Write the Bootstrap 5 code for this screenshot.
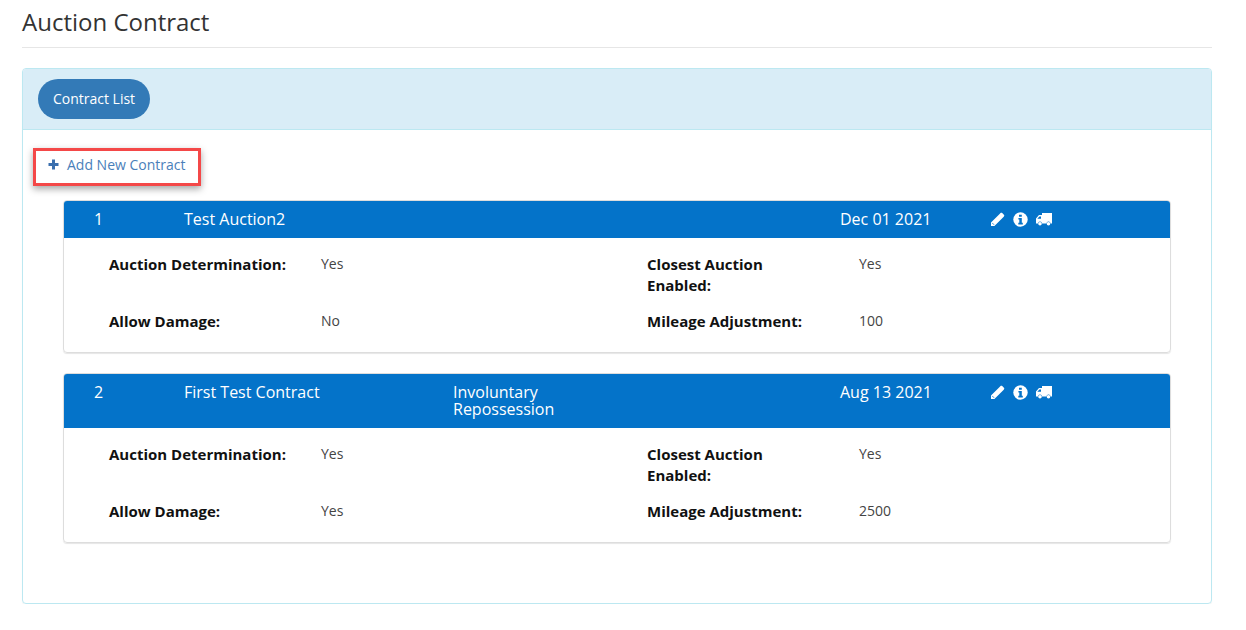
<!DOCTYPE html>
<html lang="en"><head><meta charset="utf-8"><title>Auction Contract</title>
<link href="https://cdn.jsdelivr.net/npm/bootstrap@5.3.0/dist/css/bootstrap.min.css" rel="stylesheet">
<style>
body{font-family:"Open Sans","Liberation Sans",sans-serif;font-size:14px;color:#333;background:#fff;overflow:hidden}
.page-wrap{padding:0 34px 0 22px}
.page-title{font-size:24px;font-weight:400;line-height:32px;margin:6px 0 0;padding-bottom:9px;border-bottom:1px solid #e6e6e6;color:#333}
.outer-panel{margin-top:20px;height:536px;border:1px solid #bce8f1;border-radius:4px;box-shadow:0 1px 1px rgba(0,0,0,.05)}
.outer-head{height:61px;background:#d9edf7;border-bottom:1px solid #bce8f1;padding:10px 15px;border-radius:3px 3px 0 0}
.pill-btn{display:inline-block;width:112px;height:40px;line-height:37px;padding:0 0 2px;text-align:center;background:#337ab7;color:#fff;border:0;border-radius:20px;font-size:14px;font-weight:500}
.add-link{display:flex;align-items:center;width:168px;height:38px;margin:18px 0 0 10px;padding:0 0 6px 12px;border:3px solid #f44848;box-shadow:0 3px 7px rgba(0,0,0,.35);color:#4a80ba;text-decoration:none;font-size:14px;gap:8px}
.contract{margin:14px 40px 20px 40px;border:1px solid #ddd;border-radius:4px;box-shadow:0 1px 1px rgba(0,0,0,.1);overflow:hidden}
.contract-head{display:flex;align-items:flex-start;background:#0473c9;color:#fff;font-size:16px;line-height:17px;padding:10px 0 10px 30px}
.col-no{width:90px}.col-name{width:269px}.col-type{width:387px}.col-date{width:150px}
.col-type span{display:block;width:125px}
.col-icons{display:flex;align-items:center;gap:8px;height:17px}
.contract-body{display:grid;grid-template-columns:212px 326px 212px 1fr;padding:16px 45px 0}
.contract-body>div{line-height:21px;min-height:57px}
.contract-body>.last{min-height:41px}
.lbl{font-weight:700;font-size:15px;color:#111}
.lbl.wrap-lbl{padding-right:40px}
.contract-body>.val{line-height:19px;color:#444}
</style></head>
<body>
<div class="page-wrap">
<h1 class="page-title">Auction Contract</h1>
<div class="outer-panel">
 <div class="outer-head"><button type="button" class="btn pill-btn">Contract List</button></div>
 <a href="#" class="add-link"><svg width="11" height="11" viewBox="0 0 11 11"><path d="M4 0.5h3V4h3.5v3H7v3.5H4V7H.5V4H4z" fill="#3b6fae"/></svg><span>Add New Contract</span></a>

 <div class="contract">
  <div class="contract-head">
   <div class="col-no">1</div><div class="col-name">Test Auction2</div><div class="col-type"></div><div class="col-date">Dec 01 2021</div>
   <div class="col-icons">
    <svg width="15" height="15" viewBox="0 0 15 15"><path d="M1 10.6 9.600 2l3.400 3.400L4.400 14H1zM10.500 1.100c.5-.5 1.200-.5 1.700 0l1.700 1.700c.5.5.5 1.200 0 1.700l-.9.9-3.400-3.400z" fill="#fff"/><path d="M2.200 10.900l1.900 1.900" stroke="#0473c9" stroke-width=".8"/></svg>
    <svg width="15" height="15" viewBox="0 0 15 15"><circle cx="7.500" cy="7.500" r="7.200" fill="#fff"/><path d="M6 2.700h2.800v2.100H6zM5.400 6h3.400v4.800h1v1.600H5.300v-1.600h1V7.600H5.400z" fill="#0473c9"/></svg>
    <svg width="16" height="13" viewBox="0 0 16 13"><path d="M6 0h10v10.500h-1.500a2 2 0 0 0-4 0h-4.500a2 2 0 0 0-4 0H0V5.500L3 2h3z" fill="#fff"/><circle cx="4" cy="10.700" r="1.800" fill="#fff"/><circle cx="12.500" cy="10.700" r="1.800" fill="#fff"/><path d="M1.300 5.800 3.400 3.500H5v2.300z" fill="#0473c9"/></svg>
   </div>
  </div>
  <div class="contract-body">
   <div class="lbl">Auction Determination:</div><div class="val">Yes</div><div class="lbl wrap-lbl">Closest Auction Enabled:</div><div class="val">Yes</div>
   <div class="lbl last">Allow Damage:</div><div class="val last">No</div><div class="lbl last">Mileage Adjustment:</div><div class="val last">100</div>
  </div>
 </div>

 <div class="contract">
  <div class="contract-head">
   <div class="col-no">2</div><div class="col-name">First Test Contract</div><div class="col-type"><span>Involuntary Repossession</span></div><div class="col-date">Aug 13 2021</div>
   <div class="col-icons">
    <svg width="15" height="15" viewBox="0 0 15 15"><path d="M1 10.6 9.600 2l3.400 3.400L4.400 14H1zM10.500 1.100c.5-.5 1.200-.5 1.700 0l1.700 1.700c.5.5.5 1.200 0 1.700l-.9.9-3.400-3.400z" fill="#fff"/><path d="M2.200 10.900l1.900 1.900" stroke="#0473c9" stroke-width=".8"/></svg>
    <svg width="15" height="15" viewBox="0 0 15 15"><circle cx="7.500" cy="7.500" r="7.200" fill="#fff"/><path d="M6 2.700h2.800v2.100H6zM5.400 6h3.400v4.800h1v1.600H5.300v-1.600h1V7.600H5.400z" fill="#0473c9"/></svg>
    <svg width="16" height="13" viewBox="0 0 16 13"><path d="M6 0h10v10.500h-1.500a2 2 0 0 0-4 0h-4.500a2 2 0 0 0-4 0H0V5.500L3 2h3z" fill="#fff"/><circle cx="4" cy="10.700" r="1.800" fill="#fff"/><circle cx="12.500" cy="10.700" r="1.800" fill="#fff"/><path d="M1.300 5.800 3.400 3.500H5v2.300z" fill="#0473c9"/></svg>
   </div>
  </div>
  <div class="contract-body">
   <div class="lbl">Auction Determination:</div><div class="val">Yes</div><div class="lbl wrap-lbl">Closest Auction Enabled:</div><div class="val">Yes</div>
   <div class="lbl last">Allow Damage:</div><div class="val last">Yes</div><div class="lbl last">Mileage Adjustment:</div><div class="val last">2500</div>
  </div>
 </div>
</div>
</div>
<script src="https://cdn.jsdelivr.net/npm/bootstrap@5.3.0/dist/js/bootstrap.bundle.min.js"></script>
</body></html>
